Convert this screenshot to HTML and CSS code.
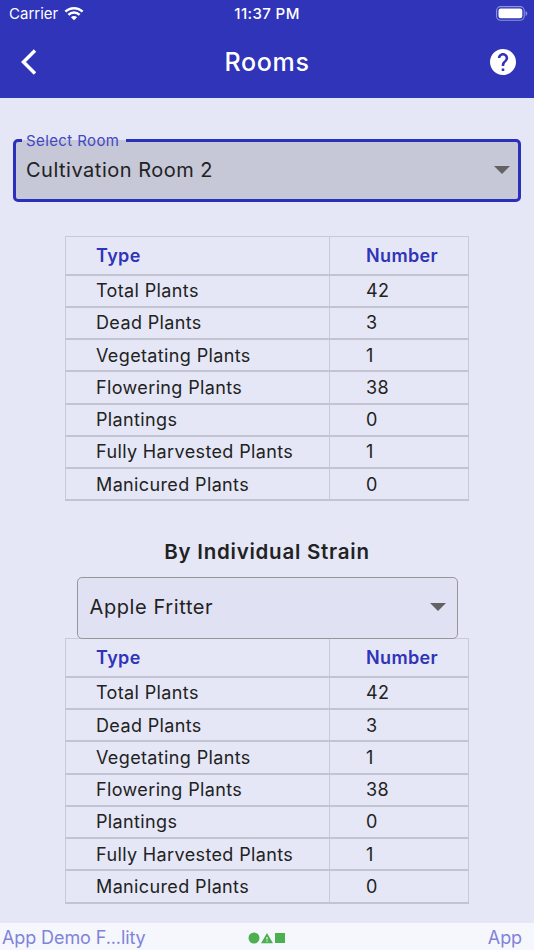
FILE: index.html
```html
<!DOCTYPE html>
<html lang="en">
<head>
  <meta charset="UTF-8">
  <meta name="viewport" content="width=device-width, initial-scale=1">
  <title>Rooms</title>
  <link rel="stylesheet" href="styles.css">
</head>
<body>

<header class="app-header">
  <div class="status-bar">
    <div class="carrier">
      <span>Carrier</span>
      <svg class="wifi" viewBox="0 0 20 15" width="20" height="15">
        <path d="M1.4 5.7a12.2 12.2 0 0 1 17.2 0M4.4 8.8a8 8 0 0 1 11.2 0" fill="none" stroke="#fff" stroke-width="2.5"/>
        <path d="M10 14.3l-3.1-3.1a4.4 4.4 0 0 1 6.2 0z" fill="#fff"/>
      </svg>
    </div>
    <div class="time">11:37 PM</div>
    <svg class="battery" viewBox="0 0 32 15" width="32" height="15">
      <rect x="0.6" y="0.6" width="27.6" height="13.6" rx="4" fill="none" stroke="#8f92dc" stroke-width="1.1"/>
      <rect x="2.5" y="2.5" width="23.8" height="9.8" rx="2.2" fill="#fff"/>
      <path d="M29.6 5v5c1-.4 1.7-1.4 1.7-2.5S30.6 5.4 29.6 5z" fill="#8f92dc"/>
    </svg>
  </div>
  <div class="nav-bar">
    <svg class="back" viewBox="0 0 17 26" width="17" height="26">
      <path d="M15 1.5L3.5 13 15 24.5" fill="none" stroke="#fff" stroke-width="3.5"/>
    </svg>
    <h1 class="title">Rooms</h1>
    <svg class="help" viewBox="2 2 20 20" width="26" height="26">
      <path fill="#fff" d="M12 2C6.48 2 2 6.48 2 12s4.480 10 10 10 10-4.480 10-10S17.520 2 12 2zm1 17h-2v-2h2v2zm2.070-7.750l-.9.920C13.450 12.900 13 13.500 13 15h-2v-.5c0-1.100.450-2.100 1.170-2.830l1.240-1.260c.370-.360.590-.860.590-1.410 0-1.100-.9-2-2-2s-2 .9-2 2H8c0-2.210 1.790-4 4-4s4 1.790 4 4c0 .880-.360 1.680-.930 2.250z"/>
    </svg>
  </div>
</header>

<main class="content">
  <div class="select select-room">
    <span class="select-label">Select Room</span>
    <span class="select-value">Cultivation Room 2</span>
    <span class="arrow"></span>
  </div>

  <table class="plants">
    <tr><th>Type</th><th>Number</th></tr>
    <tr><td>Total Plants</td><td>42</td></tr>
    <tr><td>Dead Plants</td><td>3</td></tr>
    <tr><td>Vegetating Plants</td><td>1</td></tr>
    <tr><td>Flowering Plants</td><td>38</td></tr>
    <tr><td>Plantings</td><td>0</td></tr>
    <tr><td>Fully Harvested Plants</td><td>1</td></tr>
    <tr><td>Manicured Plants</td><td>0</td></tr>
  </table>

  <h2 class="strain-title">By Individual Strain</h2>

  <div class="select select-strain">
    <span class="select-value">Apple Fritter</span>
    <span class="arrow"></span>
  </div>

  <table class="plants plants-strain">
    <tr><th>Type</th><th>Number</th></tr>
    <tr><td>Total Plants</td><td>42</td></tr>
    <tr><td>Dead Plants</td><td>3</td></tr>
    <tr><td>Vegetating Plants</td><td>1</td></tr>
    <tr><td>Flowering Plants</td><td>38</td></tr>
    <tr><td>Plantings</td><td>0</td></tr>
    <tr><td>Fully Harvested Plants</td><td>1</td></tr>
    <tr><td>Manicured Plants</td><td>0</td></tr>
  </table>
</main>

<footer class="footer">
  <span>App Demo F...lity</span>
  <svg class="shapes" viewBox="0 0 38 12" width="38" height="12">
    <circle cx="6" cy="6" r="5.5" fill="#4caf50"/>
    <path d="M19 1l6 10.3H13z" fill="#4caf50"/>
    <path d="M18.4 5h1.2v2.6h-1.2zM18.4 8.5h1.2v1.2h-1.2z" fill="#f5f7fd"/>
    <rect x="27" y="1" width="10" height="10" fill="#4caf50"/>
  </svg>
  <span class="footer-right">App</span>
</footer>

</body>
</html>
```

FILE: styles.css
```css
* {
  box-sizing: border-box;
}

body {
  font-family: Inter, "Liberation Sans", sans-serif;
  background-color: #e5e7f6;
  color: #222;
  margin: 0;
  height: 950px;
  display: flex;
  flex-direction: column;
  overflow: hidden;
}

.app-header {
  background-color: #2f34b9;
  color: white;
  height: 98px;
}

.status-bar {
  display: grid;
  grid-template-columns: 1fr auto 1fr;
  align-items: center;
  height: 27px;
  padding: 0 6px 0 9px;
  font-size: 15px;
}

.carrier {
  display: flex;
  align-items: center;
  gap: 6px;
  letter-spacing: 0;
}

.time {
  font-weight: 500;
  letter-spacing: 0.4px;
  padding-right: 3px;
}

.battery {
  justify-self: end;
}

.nav-bar {
  display: grid;
  grid-template-columns: 1fr auto 1fr;
  align-items: center;
  height: 70px;
  padding: 0 18px 0 20px;
}

.title {
  margin: 0;
  font-size: 25px;
  font-weight: 500;
  letter-spacing: 0.7px;
  padding-right: 2px;
}

.help {
  justify-self: end;
}

.content {
  flex: 1;
  display: flex;
  flex-direction: column;
  align-items: center;
  padding-top: 41px;
}

.select {
  position: relative;
  display: flex;
  align-items: center;
  justify-content: space-between;
  flex-shrink: 0;
  border-radius: 5px;
  font-size: 20px;
  letter-spacing: 0.5px;
}

.select-room {
  width: 508px;
  height: 63px;
  padding: 0 8px 2px 10px;
  border: 3px solid #2a2fbc;
  background-color: #c6c7d7;
  margin-bottom: 34px;
}

.select-label {
  position: absolute;
  top: -10px;
  left: 6px;
  padding: 0 7px 0 4px;
  font-size: 15px;
  line-height: 18px;
  letter-spacing: 0.4px;
  color: #4246c4;
  background: linear-gradient(#e5e7f6 8px, #c6c7d7 8px);
}

.arrow {
  border: 8px solid transparent;
  border-top-color: #626262;
  border-bottom: 0;
}

.select-strain {
  width: 381px;
  height: 62px;
  padding: 0 11px 2px 12px;
  border: 1px solid #97979b;
  background-color: #e0e1f3;
  letter-spacing: 0.6px;
}

.plants {
  width: 404px;
  table-layout: fixed;
  border-collapse: collapse;
  font-size: 18px;
  letter-spacing: 0.37px;
}

.plants th, .plants td {
  height: 32.25px;
  padding: 1px 0 0 30px;
  border: 1px solid #c9cad8;
  border-bottom: 2px solid #c3c4d2;
  text-align: left;
  line-height: 22px;
}

.plants th {
  height: 38px;
  color: #2f34b9;
  font-weight: 600;
}

.plants th:first-child {
  width: 264px;
}

.plants th:last-child, .plants td:last-child {
  padding-left: 36px;
}

.plants-strain {
  margin-top: -1px;
}

.strain-title {
  margin: 38px 0 12px;
  font-size: 20.5px;
  line-height: 26px;
  font-weight: 600;
  letter-spacing: 0.75px;
}

.footer {
  display: grid;
  grid-template-columns: 1fr auto 1fr;
  align-items: center;
  height: 27px;
  padding: 1px 12px 0 2px;
  background-color: #f5f7fd;
  color: #8083d8;
  font-size: 18px;
  letter-spacing: -0.1px;
}

.shapes {
  margin: 1px -10px 0 0;
}

.footer-right {
  justify-self: end;
}
```
